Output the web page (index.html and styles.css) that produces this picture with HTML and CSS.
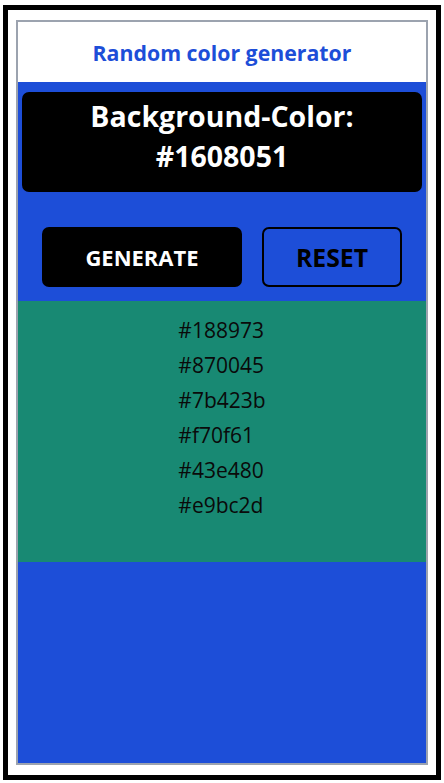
FILE: index.html
```html
<!DOCTYPE html>
<html lang="en">
<head>
<meta charset="utf-8">
<title>Random color generator</title>
<link rel="stylesheet" href="styles.css">
</head>
<body>
<div class="frame">
  <div class="app">
    <h1 class="title">Random color generator</h1>
    <main class="stage">
      <div class="display">Background-Color:<br>#1608051</div>
      <div class="actions">
        <button class="btn btn-generate" type="button">GENERATE</button>
        <button class="btn btn-reset" type="button">RESET</button>
      </div>
      <section class="history">
        <ul class="history-list">
          <li>#188973</li>
          <li>#870045</li>
          <li>#7b423b</li>
          <li>#f70f61</li>
          <li>#43e480</li>
          <li>#e9bc2d</li>
        </ul>
      </section>
    </main>
  </div>
</div>
</body>
</html>
```
FILE: styles.css
```css
* { box-sizing: border-box; }

html, body {
  margin: 0;
  padding: 0;
  background: #ffffff;
}

body {
  font-family: "Open Sans", "Noto Sans", sans-serif;
  padding: 5px 3px 3px 3px;
}

.frame {
  height: 775px;
  border: 5px solid #000000;
  padding: 10px 8px;
}

.app {
  height: 100%;
  border: 2px solid #9ca3af;
  display: flex;
  flex-direction: column;
}

.title {
  margin: 0;
  height: 60px;
  display: flex;
  align-items: center;
  justify-content: center;
  font-size: 21.3px;
  font-weight: 700;
  color: #1d4ed8;
}

.stage {
  flex: 1;
  background: #1d4ed8;
  display: flex;
  flex-direction: column;
  padding-top: 10px;
}

.display {
  margin: 0 4px;
  height: 100px;
  background: #000000;
  color: #ffffff;
  border-radius: 7px;
  font-size: 28.5px;
  font-weight: 700;
  line-height: 40px;
  text-align: center;
  padding-top: 4px;
}

.actions {
  display: flex;
  justify-content: center;
  gap: 20px;
  margin-top: 35px;
}

.btn {
  height: 60px;
  border-radius: 7px;
  font-family: "Open Sans", "Noto Sans", sans-serif;
  font-weight: 700;
  cursor: pointer;
  padding: 0;
}

.btn-generate {
  width: 200px;
  background: #000000;
  color: #ffffff;
  border: none;
  font-size: 22px;
}

.btn-reset {
  width: 140px;
  background: transparent;
  color: #000000;
  border: 2px solid #000000;
  font-size: 24.8px;
}

.history {
  margin-top: 14px;
  padding-top: 12px;
  height: 261px;
  background: #188973;
  display: flex;
  justify-content: center;
  align-items: flex-start;
}

.history-list {
  list-style: none;
  margin: 0;
  padding: 0;
  text-align: left;
  color: #0a0a0a;
  font-size: 21px;
  line-height: 35px;
}
```
